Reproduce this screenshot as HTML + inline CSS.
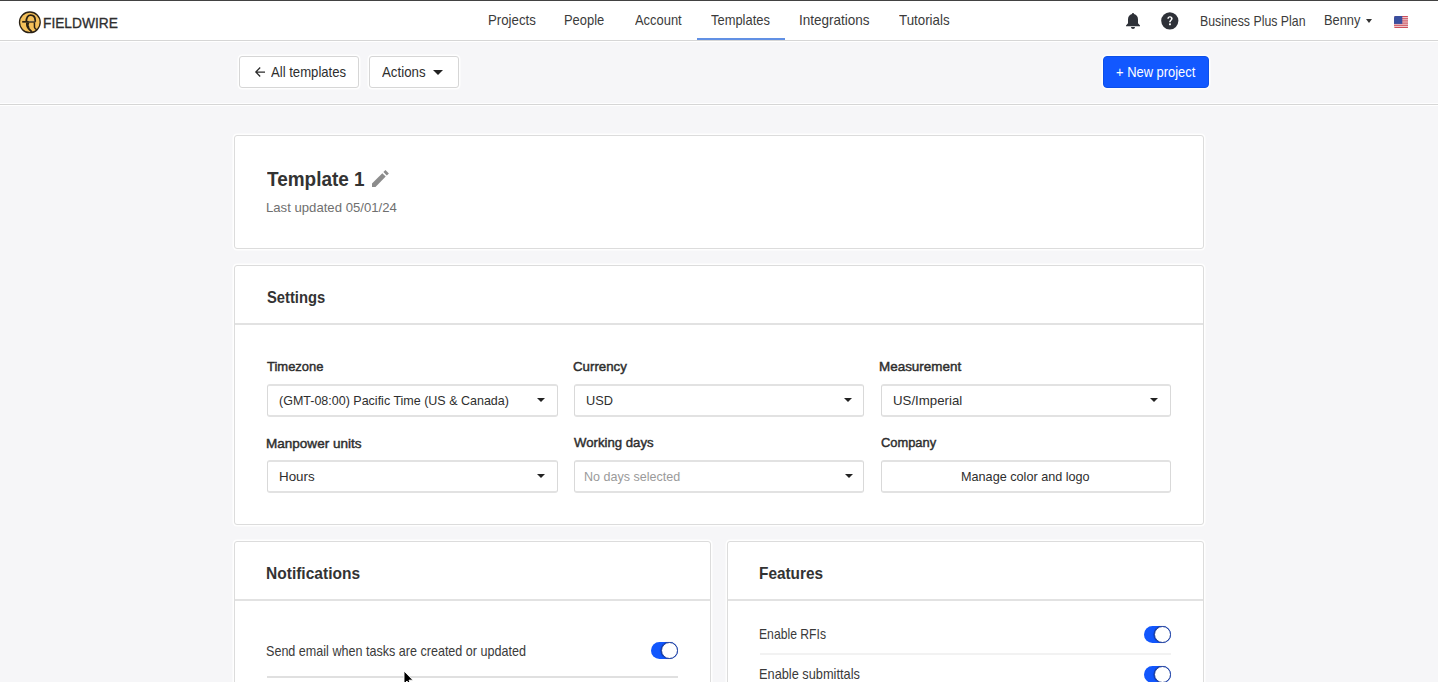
<!DOCTYPE html>
<html><head><meta charset="utf-8"><title>Fieldwire - Template 1</title>
<style>
html,body{margin:0;padding:0;}
body{width:1438px;height:682px;overflow:hidden;position:relative;background:#f6f6f8;font-family:"Liberation Sans",sans-serif;}
.a{position:absolute;box-sizing:border-box;}
.t{position:absolute;white-space:nowrap;line-height:1;transform-origin:0 0;display:block;}
.topline{left:0;top:0;width:1438px;height:1px;background:#424242;}
.header{left:0;top:1px;width:1438px;height:40px;background:#fff;border-bottom:1px solid #d6d6d6;box-shadow:0 1px 0 #fff;}
.tb{left:0;top:42px;width:1438px;height:63px;background:#f6f6f8;border-bottom:1px solid #d6d6d6;box-shadow:0 1px 0 #fff, inset 0 -1px 0 rgba(255,255,255,0.9);}
.btn{background:#fff;border:1px solid #d6d6d6;border-radius:3px;box-shadow:0 0 0 1.5px rgba(255,255,255,0.85);}
.card{background:#fff;border:1px solid #dcdcdc;border-radius:3px;box-shadow:0 0 0 1.5px rgba(255,255,255,0.85);}
.hr{height:1px;background:#e2e2e2;}
.sel{background:#fff;border:1px solid #d9d9d9;border-top:2px solid #e2e2e2;border-bottom:2px solid #e2e2e2;border-radius:3px;}
.caret{width:0;height:0;border-left:4px solid transparent;border-right:4px solid transparent;border-top:4px solid #222;}
.tog{width:27px;height:17.4px;border-radius:9px;background:#1257fd;}
.knob{width:17.4px;height:17.4px;border-radius:50%;background:#fff;border:1.1px solid #23419a;box-shadow:-0.6px 0 0.8px rgba(0,25,110,0.55);}
</style></head>
<body>
<div class="a topline"></div>
<div class="a header"></div>
<!-- logo -->
<svg class="a" style="left:16px;top:8px" width="28" height="28" viewBox="0 0 28 28">
  <circle cx="13.85" cy="14.35" r="10.35" fill="#f4c05a" stroke="#2a2115" stroke-width="1.3"/>
  <path d="M10.3 13.8 C10.3 9.4 12.1 7.2 14.7 7.2 C17.5 7.2 19.2 9.4 19.2 12.6 L19.2 13.8" fill="none" stroke="#2a2115" stroke-width="1.8"/>
  <path d="M6.2 13.8 L19.4 13.8" stroke="#2a2115" stroke-width="1.7"/>
  <path d="M12.6 13.1 L18.6 13.1" stroke="#d9c9a0" stroke-width="0.6"/>
  <path d="M10.9 14.5 C10.7 17.2 11.3 19.4 13 21 L15.8 23.8" fill="none" stroke="#2a2115" stroke-width="1.8"/>
  <path d="M11.2 14.6 L13.4 14.6 L12.6 17.2 L13.6 19.4 L12.2 19.8 Z" fill="#2a2115"/>
  <path d="M18.4 14.5 L18.5 19.4 C18.7 20.4 19.6 21.2 20.9 21.9" fill="none" stroke="#2a2115" stroke-width="1.5"/>
</svg>
<!-- nav underline -->
<div class="a" style="left:697px;top:38px;width:88px;height:2px;background:#6190e4;"></div>
<!-- bell -->
<svg class="a" style="left:1125px;top:12px" width="16" height="18" viewBox="0 0 16 18">
  <path d="M8 1 C8.7 1 9 1.5 9 2.1 C11.6 2.6 13 4.8 13 7.5 L13 11.3 L15 13.6 L15 14.2 L1 14.2 L1 13.6 L3 11.3 L3 7.5 C3 4.8 4.4 2.6 7 2.1 C7 1.5 7.3 1 8 1 Z" fill="#2e3138"/>
  <path d="M6 15 L10 15 C10 16.2 9.1 17 8 17 C6.9 17 6 16.2 6 15 Z" fill="#2e3138"/>
</svg>
<!-- help -->
<svg class="a" style="left:1161px;top:12px" width="18" height="18" viewBox="0 0 18 18">
  <circle cx="8.8" cy="8.8" r="8.6" fill="#2e3138"/>
  <path d="M6.3 6.8 C6.3 5.2 7.4 4.2 9 4.2 C10.6 4.2 11.7 5.2 11.7 6.6 C11.7 8.4 9.7 8.6 9.7 10.2 L8.1 10.2 C8.1 8 10 7.9 10 6.7 C10 5.9 9.5 5.5 8.9 5.5 C8.2 5.5 7.8 6 7.8 6.8 Z" fill="#fff"/>
  <rect x="8" y="11.3" width="1.9" height="1.9" rx="0.4" fill="#fff"/>
</svg>
<!-- benny caret -->
<div class="a caret" style="left:1365.8px;top:19.3px;border-left-width:3.9px;border-right-width:3.9px;border-top-width:4px;border-top-color:#333;"></div>
<!-- flag -->
<svg class="a" style="left:1393.8px;top:15.8px" width="14.6" height="12" viewBox="0 0 14.6 12">
  <defs><clipPath id="fc"><rect width="14.6" height="12" rx="1.5"/></clipPath></defs>
  <g clip-path="url(#fc)">
  <rect width="14.6" height="12" fill="#f4dfe2"/>
  <rect y="0.000" width="15" height="0.923" fill="#c9424f"/><rect y="1.846" width="15" height="0.923" fill="#c9424f"/><rect y="3.692" width="15" height="0.923" fill="#c9424f"/><rect y="5.538" width="15" height="0.923" fill="#c9424f"/><rect y="7.385" width="15" height="0.923" fill="#c9424f"/><rect y="9.231" width="15" height="0.923" fill="#c9424f"/><rect y="11.077" width="15" height="0.923" fill="#c9424f"/>
  <rect width="8.3" height="7.9" fill="#3a4f9e"/>
  </g>
</svg>
<!-- toolbar -->
<div class="a tb"></div>
<div class="a btn" style="left:239px;top:56px;width:120px;height:32px;"></div>
<svg class="a" style="left:254px;top:66px" width="12" height="12" viewBox="0 0 12 12">
  <path d="M11 6 L2 6 M6.2 1.5 L1.8 6 L6.2 10.5" stroke="#2b2b2b" stroke-width="1.25" fill="none"/>
</svg>
<div class="a btn" style="left:369px;top:56px;width:90px;height:32px;"></div>
<div class="a caret" style="left:433px;top:69.8px;border-left-width:5px;border-right-width:5px;border-top-width:5.2px;border-top-color:#222;"></div>
<div class="a" style="left:1103px;top:56px;width:106px;height:32px;background:#1258ff;border:1px solid #0d50e8;border-radius:4px;box-shadow:0 0 0 1.5px rgba(255,255,255,0.85);"></div>

<!-- card 1 -->
<div class="a card" style="left:234px;top:135px;width:970px;height:114px;"></div>
<svg class="a" style="left:368px;top:166px" width="26" height="26" viewBox="368 166 26 26">
  <path d="M372 183.4 L382.3 173.2 L385.7 176.6 L375.5 187 L372 187 Z" fill="#8c8c8c"/>
  <path d="M383.4 172.1 L385.5 170.1 L388.9 173.5 L386.8 175.5 Z" fill="#8c8c8c"/>
</svg>

<!-- card 2 -->
<div class="a card" style="left:234px;top:265px;width:970px;height:260px;"></div>
<div class="a hr" style="left:235px;top:323px;width:968px;height:2px;"></div>
<div class="a sel" style="left:267px;top:384px;width:291px;height:33px;"></div>
<div class="a caret" style="left:537px;top:398.4px;border-left-width:4.3px;border-right-width:4.3px;border-top-width:4.6px;"></div>
<div class="a sel" style="left:574px;top:384px;width:290px;height:33px;"></div>
<div class="a caret" style="left:844px;top:398.4px;border-left-width:4.3px;border-right-width:4.3px;border-top-width:4.6px;"></div>
<div class="a sel" style="left:881px;top:384px;width:290px;height:33px;"></div>
<div class="a caret" style="left:1150px;top:398.4px;border-left-width:4.3px;border-right-width:4.3px;border-top-width:4.6px;"></div>
<div class="a sel" style="left:267px;top:460px;width:291px;height:33px;"></div>
<div class="a caret" style="left:537px;top:474.4px;border-left-width:4.3px;border-right-width:4.3px;border-top-width:4.6px;"></div>
<div class="a sel" style="left:574px;top:460px;width:290px;height:33px;"></div>
<div class="a caret" style="left:845px;top:474.4px;border-left-width:4.3px;border-right-width:4.3px;border-top-width:4.6px;"></div>
<div class="a sel" style="left:881px;top:460px;width:290px;height:33px;"></div>

<!-- card 3 -->
<div class="a card" style="left:234px;top:541px;width:477px;height:200px;"></div>
<div class="a hr" style="left:235px;top:599px;width:475px;height:2px;"></div>
<div class="a tog" style="left:651px;top:641.7px;"></div>
<div class="a knob" style="left:660.6px;top:641.7px;"></div>
<div class="a hr" style="left:267px;top:676px;width:411px;height:2px;background:#e0e0e0;"></div>

<!-- card 4 -->
<div class="a card" style="left:727px;top:541px;width:477px;height:200px;"></div>
<div class="a hr" style="left:728px;top:599px;width:475px;height:2px;"></div>
<div class="a tog" style="left:1144px;top:625.8px;"></div>
<div class="a knob" style="left:1153.6px;top:625.8px;"></div>
<div class="a hr" style="left:760px;top:653px;width:411px;height:2px;background:#f2f2f2;"></div>
<div class="a tog" style="left:1144px;top:665.6px;"></div>
<div class="a knob" style="left:1153.6px;top:665.6px;"></div>

<span class="t" style="left:43.37px;top:16.58px;font-size:13.9px;font-weight:400;color:#2e2e2e;transform:scaleX(0.9889);-webkit-text-stroke:0.3px #2e2e2e;">FIELDWIRE</span>
<span class="t" style="left:487.56px;top:13.53px;font-size:13.9px;font-weight:400;color:#3b3b3b;transform:scaleX(0.9537);">Projects</span>
<span class="t" style="left:564.22px;top:13.53px;font-size:13.9px;font-weight:400;color:#3b3b3b;transform:scaleX(0.9294);">People</span>
<span class="t" style="left:634.72px;top:13.53px;font-size:13.9px;font-weight:400;color:#3b3b3b;transform:scaleX(0.9302);">Account</span>
<span class="t" style="left:711.18px;top:13.53px;font-size:13.9px;font-weight:400;color:#3b3b3b;transform:scaleX(0.9298);">Templates</span>
<span class="t" style="left:799.49px;top:13.53px;font-size:13.9px;font-weight:400;color:#3b3b3b;transform:scaleX(0.9725);">Integrations</span>
<span class="t" style="left:898.55px;top:13.53px;font-size:13.9px;font-weight:400;color:#3b3b3b;transform:scaleX(0.9594);">Tutorials</span>
<span class="t" style="left:1199.54px;top:14.51px;font-size:13.9px;font-weight:400;color:#3b3b3b;transform:scaleX(0.8871);">Business Plus Plan</span>
<span class="t" style="left:1324.18px;top:13.54px;font-size:13.9px;font-weight:400;color:#3b3b3b;transform:scaleX(0.9233);">Benny</span>
<span class="t" style="left:271.41px;top:65.54px;font-size:13.9px;font-weight:400;color:#2e2e2e;transform:scaleX(0.9445);">All templates</span>
<span class="t" style="left:382.46px;top:65.53px;font-size:13.9px;font-weight:400;color:#2e2e2e;transform:scaleX(0.9564);">Actions</span>
<span class="t" style="left:1115.78px;top:65.53px;font-size:13.9px;font-weight:400;color:#ffffff;transform:scaleX(0.9298);">+ New project</span>
<span class="t" style="left:266.59px;top:169.59px;font-size:19.5px;font-weight:700;color:#333333;transform:scaleX(0.9726);">Template 1</span>
<span class="t" style="left:266.34px;top:201.56px;font-size:12.6px;font-weight:400;color:#6f6f6f;transform:scaleX(1.0434);">Last updated 05/01/24</span>
<span class="t" style="left:266.97px;top:288.53px;font-size:16.5px;font-weight:700;color:#333333;transform:scaleX(0.8941);">Settings</span>
<span class="t" style="left:267.24px;top:359.59px;font-size:13.6px;font-weight:400;color:#2e2e2e;transform:scaleX(0.9546);-webkit-text-stroke:0.45px #2e2e2e;">Timezone</span>
<span class="t" style="left:572.87px;top:359.59px;font-size:13.6px;font-weight:400;color:#2e2e2e;transform:scaleX(0.9763);-webkit-text-stroke:0.45px #2e2e2e;">Currency</span>
<span class="t" style="left:879.06px;top:359.59px;font-size:13.6px;font-weight:400;color:#2e2e2e;transform:scaleX(0.9885);-webkit-text-stroke:0.45px #2e2e2e;">Measurement</span>
<span class="t" style="left:265.90px;top:436.59px;font-size:13.6px;font-weight:400;color:#2e2e2e;transform:scaleX(0.9952);-webkit-text-stroke:0.45px #2e2e2e;">Manpower units</span>
<span class="t" style="left:574.16px;top:435.59px;font-size:13.6px;font-weight:400;color:#2e2e2e;transform:scaleX(0.9689);-webkit-text-stroke:0.45px #2e2e2e;">Working days</span>
<span class="t" style="left:880.58px;top:435.59px;font-size:13.6px;font-weight:400;color:#2e2e2e;transform:scaleX(0.9479);-webkit-text-stroke:0.45px #2e2e2e;">Company</span>
<span class="t" style="left:278.90px;top:393.54px;font-size:13.3px;font-weight:400;color:#2e2e2e;transform:scaleX(0.9400);">(GMT-08:00) Pacific Time (US &amp; Canada)</span>
<span class="t" style="left:585.69px;top:393.54px;font-size:13.3px;font-weight:400;color:#2e2e2e;transform:scaleX(0.9600);">USD</span>
<span class="t" style="left:892.52px;top:393.54px;font-size:13.3px;font-weight:400;color:#2e2e2e;transform:scaleX(0.9964);">US/Imperial</span>
<span class="t" style="left:279.34px;top:469.55px;font-size:13.3px;font-weight:400;color:#2e2e2e;transform:scaleX(1.0061);">Hours</span>
<span class="t" style="left:584.28px;top:469.54px;font-size:13.3px;font-weight:400;color:#9a9a9a;transform:scaleX(0.9424);">No days selected</span>
<span class="t" style="left:960.58px;top:469.59px;font-size:13.3px;font-weight:400;color:#2e2e2e;transform:scaleX(0.9510);">Manage color and logo</span>
<span class="t" style="left:265.75px;top:564.53px;font-size:16.5px;font-weight:700;color:#333333;transform:scaleX(0.9415);">Notifications</span>
<span class="t" style="left:265.95px;top:644.53px;font-size:13.9px;font-weight:400;color:#3a3a3a;transform:scaleX(0.9050);">Send email when tasks are created or updated</span>
<span class="t" style="left:759.28px;top:564.53px;font-size:16.5px;font-weight:700;color:#333333;transform:scaleX(0.9321);">Features</span>
<span class="t" style="left:759.28px;top:627.59px;font-size:13.9px;font-weight:400;color:#3a3a3a;transform:scaleX(0.8763);">Enable RFIs</span>
<span class="t" style="left:759.14px;top:667.53px;font-size:13.9px;font-weight:400;color:#3a3a3a;transform:scaleX(0.9204);">Enable submittals</span>

<!-- cursor -->
<svg class="a" style="left:402px;top:669px" width="14" height="14" viewBox="0 0 14 14">
  <path d="M2 2 L2 15 L5 12 L7 16.5 L9 15.6 L7 11.2 L11 11.2 Z" fill="#000" stroke="#fff" stroke-width="0.9" stroke-linejoin="round"/>
</svg>
</body></html>
